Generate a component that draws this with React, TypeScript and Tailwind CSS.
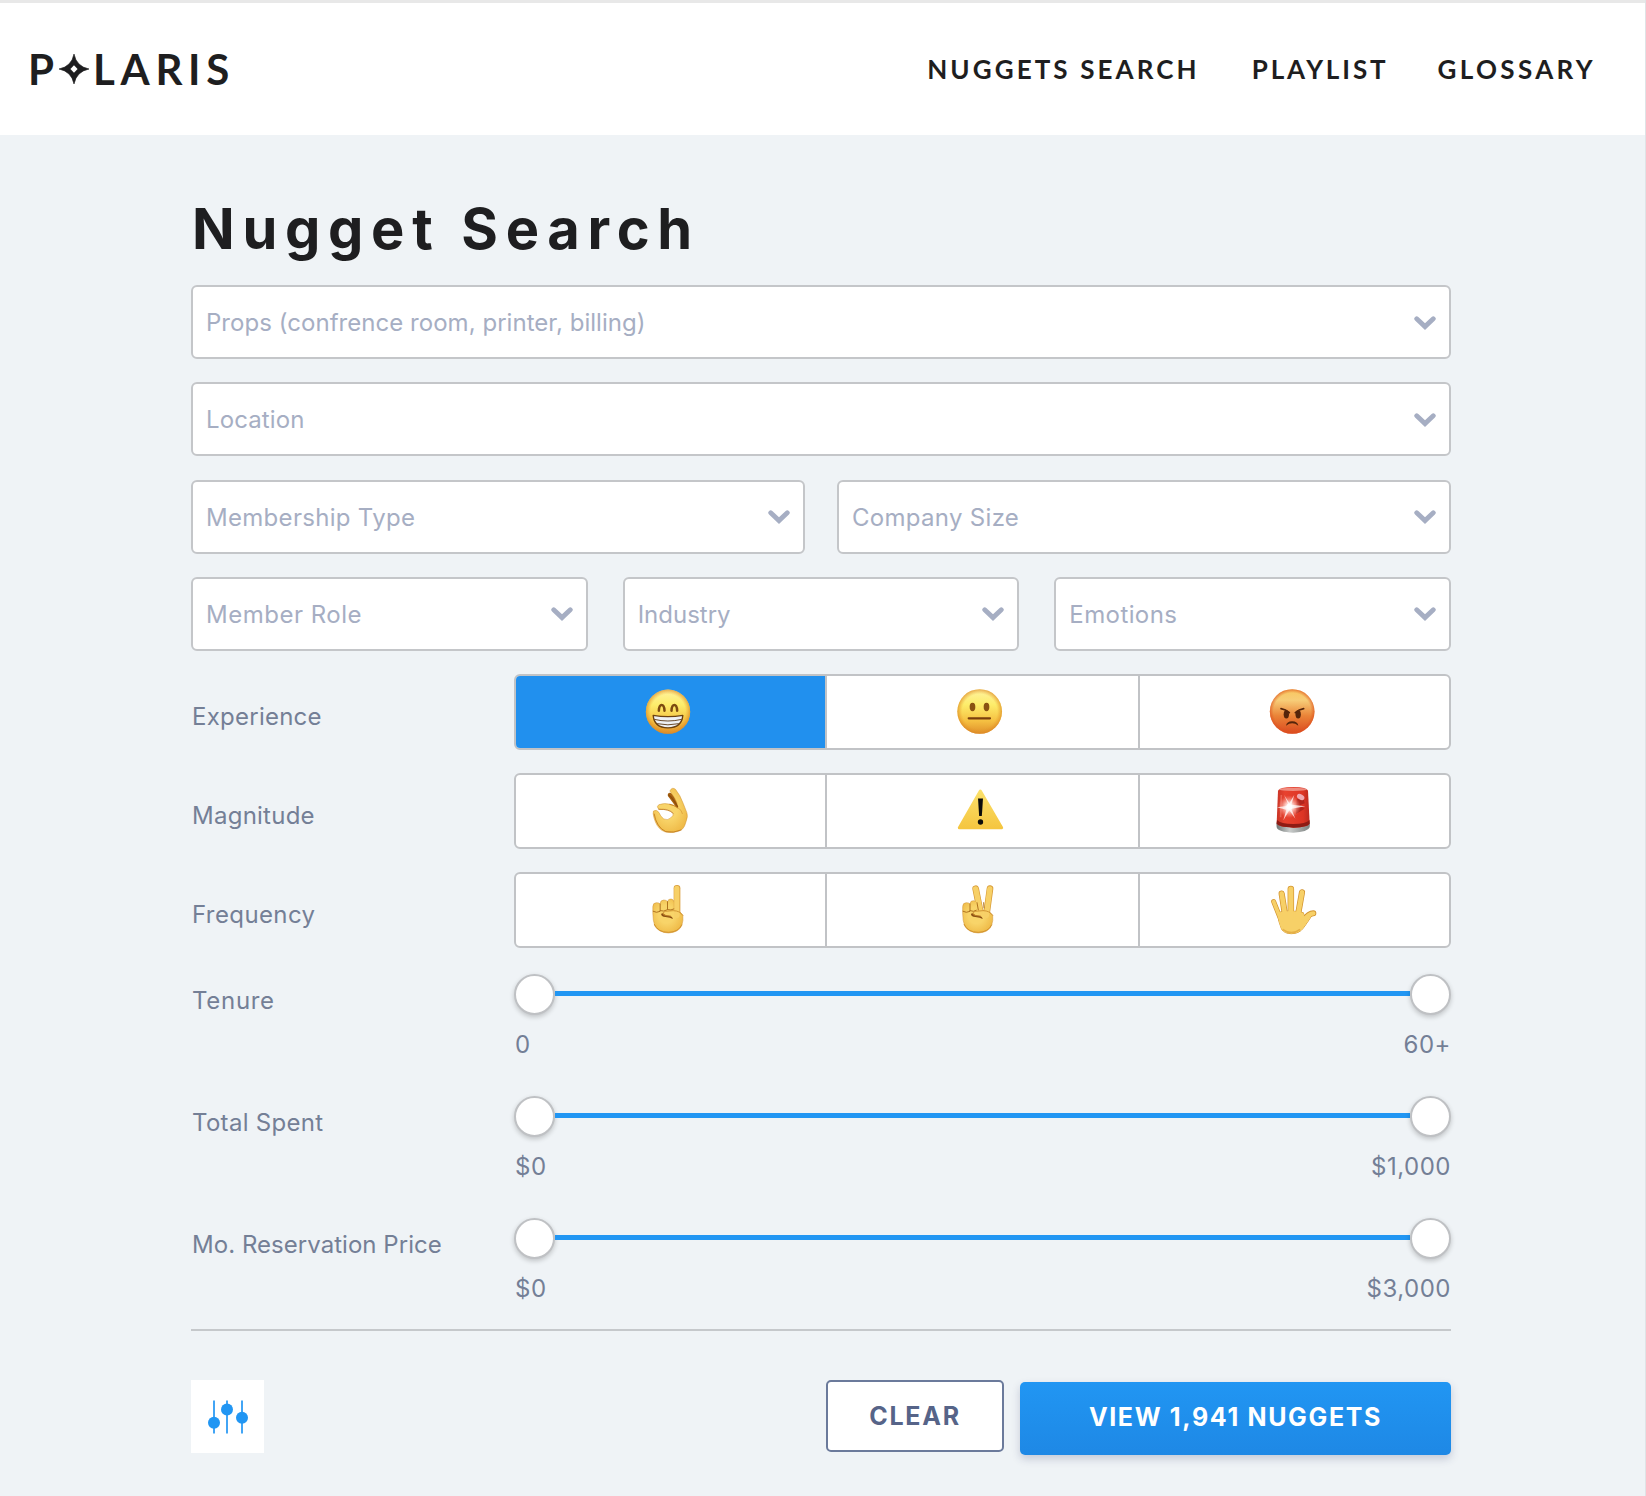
import React from "react";

function Chevron() {
  return (
    <svg width="22" height="14" viewBox="0 0 22 14" fill="none" className="mt-px shrink-0">
      <path d="M2.7 2.8 L11 10.6 L19.3 2.8" stroke="#a6aec3" strokeWidth="4.8" strokeLinecap="round" strokeLinejoin="miter" />
    </svg>
  );
}

function Field({ label, className = "tracking-[0.2px]" }: { label: string; className?: string }) {
  return (
    <button className="flex h-[74px] min-w-0 flex-1 items-center justify-between rounded-[6px] border-2 border-[#c4c6c9] bg-white pr-[13px] pl-[13px] text-left">
      <span className={"pt-[2px] text-[24px] leading-none font-normal whitespace-nowrap text-[#a6aec3] " + className}>{label}</span>
      <Chevron />
    </button>
  );
}

function Defs() {
  return (
    <svg width="0" height="0" className="absolute">
      <defs>
        <linearGradient id="face" x1="0" y1="0" x2="0" y2="1">
          <stop offset="0" stopColor="#fff3a0" />
          <stop offset="0.35" stopColor="#fdec6a" />
          <stop offset="0.7" stopColor="#f6c243" />
          <stop offset="1" stopColor="#df8f2a" />
        </linearGradient>
        <radialGradient id="rim" cx="0.5" cy="0.5" r="0.52">
          <stop offset="0.75" stopColor="#e79a2c" stopOpacity="0" />
          <stop offset="1" stopColor="#d98220" stopOpacity="0.8" />
        </radialGradient>
        <linearGradient id="anger" x1="0" y1="0" x2="0" y2="1">
          <stop offset="0" stopColor="#f8c65e" />
          <stop offset="0.25" stopColor="#f7cd78" />
          <stop offset="0.6" stopColor="#ea8337" />
          <stop offset="1" stopColor="#da481f" />
        </linearGradient>
        <radialGradient id="angerRim" cx="0.5" cy="0.5" r="0.52">
          <stop offset="0.8" stopColor="#e0561f" stopOpacity="0" />
          <stop offset="1" stopColor="#dd4d1d" stopOpacity="0.8" />
        </radialGradient>
        <radialGradient id="skin" cx="0.45" cy="0.45" r="0.65">
          <stop offset="0.4" stopColor="#f8d469" />
          <stop offset="1" stopColor="#edb541" />
        </radialGradient>
        <linearGradient id="sign" x1="0" y1="0" x2="0" y2="1">
          <stop offset="0" stopColor="#fbe06a" />
          <stop offset="1" stopColor="#f5c640" />
        </linearGradient>
        <linearGradient id="lamp" x1="0" y1="0" x2="1" y2="0">
          <stop offset="0" stopColor="#c93426" />
          <stop offset="0.25" stopColor="#e8422f" />
          <stop offset="0.8" stopColor="#dd3525" />
          <stop offset="1" stopColor="#b92a1f" />
        </linearGradient>
        <linearGradient id="metal" x1="0" y1="0" x2="1" y2="0">
          <stop offset="0" stopColor="#6f7574" />
          <stop offset="0.4" stopColor="#c9cccb" />
          <stop offset="1" stopColor="#7c8180" />
        </linearGradient>
        <radialGradient id="glow">
          <stop offset="0" stopColor="#ffffff" />
          <stop offset="0.35" stopColor="#ffe0da" stopOpacity="0.9" />
          <stop offset="1" stopColor="#ff9f90" stopOpacity="0" />
        </radialGradient>
      </defs>
    </svg>
  );
}

function Emoji({ box, label, children }: { box: string; label: string; children: React.ReactNode }) {
  return (
    <svg role="img" aria-label={label} width="50" height="72" viewBox={box}>
      {children}
    </svg>
  );
}

const Grin = () => (
  <Emoji box="67.5 -12 150 216" label="Good">
    <circle cx="142.5" cy="95" r="66.5" fill="url(#face)" />
    <circle cx="142.5" cy="95" r="66.5" fill="url(#rim)" />
    <path d="M115 92 Q116 75 123.5 75 Q131 75 132 92" fill="none" stroke="#7c4a10" strokeWidth="7.5" strokeLinecap="round" />
    <path d="M153 92 Q154 75 161.5 75 Q169 75 170 92" fill="none" stroke="#7c4a10" strokeWidth="7.5" strokeLinecap="round" />
    <path d="M98 106 Q142 114 187 106 Q184 143 142.5 143.5 Q101 143 98 106Z" fill="#eef0f4" stroke="#6b400f" strokeWidth="4" strokeLinejoin="round" />
    <path d="M101 118 Q142 128 184 118 M110 131 Q142 138 175 131" fill="none" stroke="#6b4a2a" strokeWidth="3" />
  </Emoji>
);

const Neutral = () => (
  <Emoji box="74 -12 150 216" label="Neutral">
    <circle cx="148" cy="94.5" r="67" fill="url(#face)" />
    <circle cx="148" cy="94.5" r="67" fill="url(#rim)" />
    <ellipse cx="126.5" cy="81" rx="8.5" ry="12.5" fill="#8a5212" />
    <ellipse cx="168.5" cy="81" rx="8.5" ry="12.5" fill="#8a5212" />
    <path d="M115 115 H179" stroke="#7a3f0c" strokeWidth="6.5" strokeLinecap="round" />
  </Emoji>
);

const Angry = () => (
  <Emoji box="51 -12 150 216" label="Bad">
    <circle cx="126.5" cy="94.5" r="67" fill="url(#anger)" />
    <circle cx="126.5" cy="94.5" r="67" fill="url(#angerRim)" />
    <ellipse cx="109" cy="103" rx="8" ry="12.5" fill="#54240a" />
    <ellipse cx="144.5" cy="103" rx="8" ry="12.5" fill="#54240a" />
    <path d="M93 86 Q107 88 118 98 M161 86 Q147 88 136 98" fill="none" stroke="#54240a" strokeWidth="5" strokeLinecap="round" />
    <path d="M108 137 Q110 124 126.5 123.5 Q143 124 145 137 Q136 130 126.5 130 Q117 130 108 137Z" fill="#54240a" />
  </Emoji>
);

const OkHand = () => (
  <Emoji box="67.5 285 150 216" label="Low">
    <path d="M142 342 Q148 334 158 344 L180 384 L170 386 Q150 358 142 348Z" fill="#a8620f" />
    <path
      d="M148 333 Q154 320 165 328 Q179 345 188 370 L199 398 Q203 408 197 424 Q192 443 185 448 Q176 455 164 456 Q140 461 124 451 Q108 440 101 415 Q96 398 99 393 Q108 387 115 397 Q120 410 130 417 Q142 422 150 414 Q160 407 158 400 Q150 390 135 388 Q122 389 114 387 Q107 379 115 374 Q132 368 150 373 Q162 376 172 383 Q171 368 162 353Z"
      fill="url(#skin)"
      stroke="#cf9131"
      strokeWidth="1.5"
    />
    <path d="M115 388 Q145 386 158 400 M172 384 Q160 374 148 373 M101 402 Q108 442 136 455 Q160 460 182 450" fill="none" stroke="#c07a1c" strokeWidth="2.5" strokeLinecap="round" />
    <path d="M145 345 Q158 356 171 380" fill="none" stroke="#8d4d0c" strokeWidth="4" strokeLinecap="round" />
    <path d="M172 383 Q184 390 186 402" fill="none" stroke="#dca03a" strokeWidth="2.5" />
  </Emoji>
);

const Warning = () => (
  <Emoji box="74 285 150 216" label="Medium">
    <path d="M150 333 L214 443 H87Z" fill="url(#sign)" stroke="url(#sign)" strokeWidth="9" strokeLinejoin="round" />
    <path d="M143 355.5 H158 L154.5 408 H146.5Z" fill="#0b0b0b" />
    <circle cx="150.5" cy="426" r="8" fill="#0b0b0b" />
  </Emoji>
);

const Siren = () => (
  <Emoji box="51 285 150 216" label="High">
    <path d="M79 428 Q130 442 180 428 L179 442 Q174 457 130 458 Q84 457 80 442Z" fill="url(#metal)" />
    <path d="M84 332 Q86 322 130 321 Q172 322 174 332 L179 429 Q176 442 130 443 Q83 441 80 430Z" fill="url(#lamp)" />
    <path d="M81 420 Q92 432 130 432 Q168 432 178.5 420 L179 429 Q176 442 130 443 Q83 441 80 430Z" fill="#8e1b14" />
    <ellipse cx="129" cy="328" rx="42" ry="5" fill="#f3a79c" opacity="0.75" />
    <path d="M140 358 L160 352 L164 370 L150 376 L164 386 L138 402Z" fill="#a11f18" opacity="0.7" />
    <ellipse cx="152" cy="351" rx="12" ry="8" fill="#f0a9b0" transform="rotate(30 152 351)" />
    <path d="M94 345 Q92 380 92 412" fill="none" stroke="#f3796a" strokeWidth="5" opacity="0.6" />
    <circle cx="118" cy="380" r="34" fill="url(#glow)" />
    <path d="M118 380 l-16 -36 l16 26 l15 -26 l-9 30 l42 5 l-42 7 l12 30 l-18 -25 l-18 30 l9 -32 l-28 -7 l28 -4Z" fill="#fff" opacity="0.75" />
    <circle cx="118" cy="380" r="9" fill="#fff" />
  </Emoji>
);

const fist =
  "M97 680 Q97 668 108 668 Q116 668 119 672 Q119 660 130 660 Q138 660 141 665 Q143 656 152 657 Q160 658 161 668 L161 690 Q180 692 187 706 Q189 722 184 736 Q176 757 144 759 Q115 758 103 738 Q97 722 97 700Z";
const fistLines = "M98 694 Q108 700 119 694 V672 M119 692 Q130 696 141 689 V665 M141 689 Q152 692 160 687";

const Thumb = () => (
  <>
    <path d="M122 701 Q121 709 135 711 Q150 713 157 717 Q157 710 146 707 Q133 707 127 700Z" fill="#8a4f14" />
    <path d="M187 706 Q178 692 158 692 L134 694 Q125 697 129 704 Q136 708 150 708" fill="none" stroke="#cb8b2b" strokeWidth="2.5" strokeLinecap="round" />
    <path d="M101 732 Q112 757 144 757 Q174 756 184 734" fill="none" stroke="#d3932e" strokeWidth="3" />
  </>
);

const PointUp = () => (
  <Emoji box="67.5 582 150 216" label="Once">
    <path d="M169.5 625 V708" stroke="#d79a36" strokeWidth="20" strokeLinecap="round" />
    <path d={fist} fill="url(#skin)" stroke="#cf9131" strokeWidth="1.5" />
    <path d="M169 625.5 V706" stroke="#f7d067" strokeWidth="16" strokeLinecap="round" />
    <path d={fistLines} fill="none" stroke="#b0731f" strokeWidth="3" strokeLinecap="round" />
    <Thumb />
  </Emoji>
);

const Victory = () => (
  <Emoji box="74 582 150 216" label="Sometimes">
    <path d="M136 626 L152 706 M179 626 L168 706" stroke="#d79a36" strokeWidth="20" strokeLinecap="round" />
    <path
      d="M97 680 Q97 668 108 668 Q116 668 119 672 Q120 661 130 662 Q138 663 140 670 L145 690 Q178 690 187 706 Q189 722 184 736 Q176 757 144 759 Q115 758 103 738 Q97 722 97 700Z"
      fill="url(#skin)"
      stroke="#cf9131"
      strokeWidth="1.5"
    />
    <path d="M136 626.5 L152 704 M178.5 626.5 L168 706" stroke="#f7d067" strokeWidth="16" strokeLinecap="round" />
    <path d="M98 694 Q108 700 119 694 V672 M119 692 Q130 697 138 691 M140 668 L144 690 M160 668 L161 684" fill="none" stroke="#b0731f" strokeWidth="3" strokeLinecap="round" />
    <Thumb />
  </Emoji>
);

const OpenHand = () => {
  const palm = "M83 698 Q120 688 160 698 Q162 712 168 714 L186 706 Q172 728 160 744 Q148 761 124 761 Q104 761 95 748 Q86 730 83 698Z";
  return (
    <Emoji box="51 582 150 216" label="Often">
      <g stroke="#d3942f" strokeLinecap="round" fill="none">
        <path d="M71 665 L93 720" strokeWidth="15" />
        <path d="M95 641 L106 710" strokeWidth="18.5" />
        <path d="M122.5 627 V710" strokeWidth="19.5" />
        <path d="M156 637 L143 710" strokeWidth="18.5" />
        <path d="M190 700 Q176 700 158 724" strokeWidth="18" />
        <path d={palm} strokeWidth="3" />
      </g>
      <path d={palm} fill="#f7d067" />
      <g stroke="#f7d067" strokeLinecap="round" fill="none">
        <path d="M71 665 L93 720" strokeWidth="11" />
        <path d="M95 641 L106 710" strokeWidth="14" />
        <path d="M122.5 627 V710" strokeWidth="15.5" />
        <path d="M156 637 L143 710" strokeWidth="14" />
        <path d="M190 700 Q176 700 158 724" strokeWidth="13" />
      </g>
      <path d="M98 748 Q124 768 150 748" fill="none" stroke="#dda23a" strokeWidth="5" opacity="0.7" />
    </Emoji>
  );
};

const label = "w-[323px] shrink-0 pl-px text-[24px] leading-[30px] whitespace-nowrap text-[#747f96]";

function Segments({ name, tracking, options, active }: { name: string; tracking: string; options: React.ReactNode[]; active?: number }) {
  return (
    <div className="flex h-[76px] items-center">
      <div className={label + " pt-[10px] " + tracking}>{name}</div>
      <div className="flex h-full flex-1 divide-x-2 divide-[#c1c3c6] overflow-hidden rounded-[6px] border-2 border-[#c1c3c6] bg-white">
        {options.map((option, i) => (
          <button
            key={i}
            className={
              "flex items-center justify-center " +
              (i === 0 ? "w-[311px] pr-[6px] " : i === 1 ? "w-[313px] pr-[6px] " : "flex-1 pr-[5px] ") +
              (active === i ? "bg-[#2190ee]" : "")
            }
          >
            {option}
          </button>
        ))}
      </div>
    </div>
  );
}

function Knob() {
  return <span className="size-[41px] shrink-0 rounded-full border-2 border-[#bfc1c4] bg-white shadow-[0_2px_5px_rgba(0,0,0,0.2)]" />;
}

function Range({ name, tracking, min, max }: { name: string; tracking: string; min: string; max: string }) {
  return (
    <div className="flex h-[84px]">
      <div className={label + " pt-[12px] " + tracking}>{name}</div>
      <div className="flex flex-1 flex-col justify-between">
        <div className="flex items-center">
          <Knob />
          <span className="-mt-px h-[5px] flex-1 bg-[#2196f3]" />
          <Knob />
        </div>
        <div className="-mb-px flex justify-between pl-px text-[24px] leading-[28px] tracking-[0.5px] text-[#747f96]">
          <span>{min}</span>
          <span>{max}</span>
        </div>
      </div>
    </div>
  );
}

function Logo() {
  return (
    <div className="flex items-center pt-[2px] font-['Lato',sans-serif] text-[42px] leading-none font-bold text-[#1e1e20]">
      <span className="w-[31px]">P</span>
      <svg width="30" height="30" viewBox="0 0 30 30" className="shrink-0">
        <path d="M15 0 Q17.5 12.5 30 15 Q17.5 17.5 15 30 Q12.5 17.5 0 15 Q12.5 12.5 15 0Z" fill="#1e1e20" stroke="#1e1e20" strokeWidth="0.6" />
        <path d="M15 6 Q17 12 24 15 Q17 18 15 24 Q13 18 6 15 Q13 12 15 6Z" fill="#1e1e20" stroke="#1e1e20" strokeWidth="2" />
        <path d="M15 11.2 L18.6 15 L15 18.8 L11.4 15Z" fill="#fff" />
      </svg>
      <span className="ml-[4px] tracking-[5.7px]">LARIS</span>
    </div>
  );
}

export default function App() {
  return (
    <div className="min-h-[1496px] w-full overflow-hidden border-r border-[#dfe3e6] bg-[#eff3f6] font-['Inter',sans-serif]">
      <Defs />
      <header className="flex h-[135px] items-center justify-between border-t-[3px] border-[#e8e8e8] bg-white pr-[49px] pb-[2px] pl-[28px]">
        <Logo />
        <nav className="flex items-center pt-px font-['Lato',sans-serif] text-[26px] leading-none font-bold text-[#1e1e20]">
          <a className="tracking-[3.1px]">NUGGETS SEARCH</a>
          <a className="ml-[52px] tracking-[2.9px]">PLAYLIST</a>
          <a className="ml-[49px] tracking-[3.35px]">GLOSSARY</a>
        </nav>
      </header>

      <main className="ml-[191px] w-[1260px] pt-[59px]">
        <h1 className="mb-[21px] pl-px text-[56px] leading-[70px] font-bold tracking-[7.7px] text-[#1e1e20]">Nugget Search</h1>

        <div className="flex flex-col gap-[23.3px]">
          <div className="flex">
            <Field label="Props (confrence room, printer, billing)" className="tracking-[0.04px]" />
          </div>
          <div className="flex">
            <Field label="Location" className="tracking-[0.1px]" />
          </div>
          <div className="flex gap-[32px]">
            <Field label="Membership Type" className="tracking-[0.3px]" />
            <Field label="Company Size" className="tracking-[0.3px]" />
          </div>
          <div className="flex gap-[35px]">
            <Field label="Member Role" className="tracking-[0.5px]" />
            <Field label="Industry" className="tracking-[0px]" />
            <Field label="Emotions" className="tracking-[0.4px]" />
          </div>
        </div>

        <div className="mt-[23px] flex flex-col gap-[23px]">
          <Segments name="Experience" tracking="tracking-[0.25px]" active={0} options={[<Grin />, <Neutral />, <Angry />]} />
          <Segments name="Magnitude" tracking="tracking-[0.25px]" options={[<OkHand />, <Warning />, <Siren />]} />
          <Segments name="Frequency" tracking="tracking-[0.4px]" options={[<PointUp />, <Victory />, <OpenHand />]} />
        </div>

        <div className="mt-[26px] flex flex-col gap-[38px]">
          <Range name="Tenure" tracking="tracking-[0.7px]" min="0" max="60+" />
          <Range name="Total Spent" tracking="tracking-[0.3px]" min="$0" max="$1,000" />
          <Range name="Mo. Reservation Price" tracking="tracking-[0.04px]" min="$0" max="$3,000" />
        </div>

        <hr className="mt-[27px] border-t-2 border-[#c5c8cb]" />

        <div className="mt-[49px] flex items-start">
          <button className="flex h-[73px] w-[73px] items-center justify-center bg-white">
            <svg width="40" height="34" viewBox="0 0 40 34" className="mt-px">
              <path d="M6 0.5 V33.5 M19 0.5 V33.5 M34 0.5 V33.5" stroke="#42a5f5" strokeWidth="2" />
              <circle cx="6" cy="22.7" r="6" fill="#2196f3" />
              <circle cx="19" cy="9.5" r="6" fill="#2196f3" />
              <circle cx="34" cy="17.7" r="6" fill="#2196f3" />
            </svg>
          </button>
          <button className="ml-auto h-[72px] w-[178px] rounded-[5px] border-2 border-[#6b7a9b] bg-white pt-[2px] text-[25px] leading-none font-bold tracking-[1.75px] text-[#566488]">
            CLEAR
          </button>
          <button className="mt-[2px] ml-[16px] h-[73px] w-[431px] rounded-[5px] bg-linear-to-b from-[#2196f3] to-[#1e88e5] pb-[2px] text-[25px] leading-none font-bold tracking-[1.65px] text-white shadow-[0_4px_9px_rgba(50,60,110,0.22)]">
            VIEW 1,941 NUGGETS
          </button>
        </div>
      </main>
    </div>
  );
}
